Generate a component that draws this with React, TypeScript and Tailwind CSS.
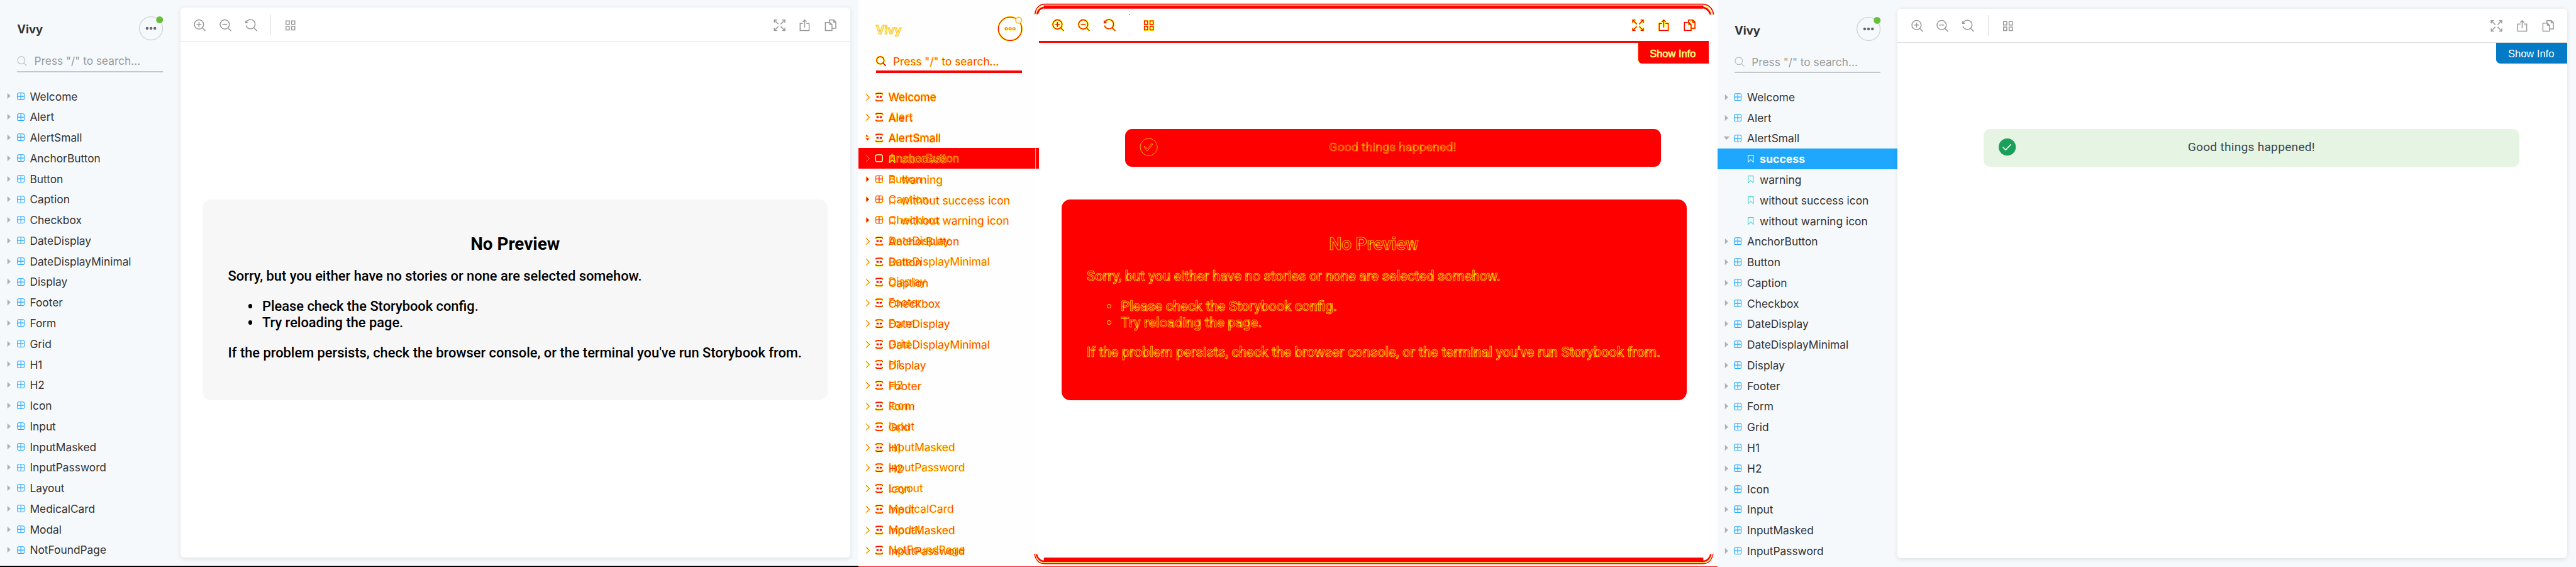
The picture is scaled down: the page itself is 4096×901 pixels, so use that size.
import type { ReactNode } from "react";

type Variant = "plain" | "diff";

const baseline = [
  "Welcome", "Alert", "AlertSmall", "AnchorButton", "Button", "Caption", "Checkbox", "DateDisplay",
  "DateDisplayMinimal", "Display", "Footer", "Form", "Grid", "H1", "H2", "Icon", "Input", "InputMasked",
  "InputPassword", "Layout", "MedicalCard", "Modal", "NotFoundPage",
];

const stories = ["success", "warning", "without success icon", "without warning icon"];

const current = [...baseline.slice(0, 3), ...stories, ...baseline.slice(3, 19)];

const isStory = (name: string) => stories.includes(name);

/* ---------- icons ---------- */

const shapes: Record<string, ReactNode> = {
  zoomIn: (
    <>
      <circle cx="12.3" cy="13" r="10.8" />
      <path d="M19.8 20.8 27 28M6.8 13h11M12.3 7.5v11" />
    </>
  ),
  zoomOut: (
    <>
      <circle cx="12.3" cy="13" r="10.8" />
      <path d="M19.8 20.8 27 28M6.8 13h11" />
    </>
  ),
  reset: <path d="M1.2 4v5.2h5.4M2 8.6A10.8 10.8 0 1 1 1.8 15.6M19.8 20.8 27 28" />,
  grid: <path d="M4 4.8h7.6v8H4zM17 4.8h7.6v8H17zM4 17.6h7.6v8H4zM17 17.6h7.6v8H17z" />,
  expand: (
    <path d="M8 2.7H1.7V9M2 3l9.3 9.3M20 2.7h6.3V9M26 3l-9.3 9.3M8 27H1.7v-6.3M2 26.7l9.3-9.3M20 27h6.3v-6.3M26 26.7l-9.3-9.3" />
  ),
  share: <path d="M9.8 10.7H3.3V27h21V10.7h-6.5M13.8 20V3M9.4 7l4.4-4.3L18.2 7" />,
  copy: (
    <path d="M2 8.3h10.5l5 5V27H2zM12.5 8.3v5h5M11.3 8V2.7h10.4l4.7 4.8V22h-8.6M21.5 2.7v5h5" />
  ),
};

function Icon({ name, variant }: { name: string; variant: Variant }) {
  if (variant === "diff") {
    return (
      <svg viewBox="0 0 28 28" fill="none" className="size-[19.11px] shrink-0 overflow-visible">
        <g stroke="#ffff00" strokeWidth="4.2">{shapes[name]}</g>
        <g stroke="#ff0000" strokeWidth="2">{shapes[name]}</g>
      </svg>
    );
  }
  return (
    <svg viewBox="0 0 28 28" fill="none" stroke="#999999" strokeWidth="2.2" className="size-[19.11px] shrink-0 overflow-visible">
      {shapes[name]}
    </svg>
  );
}

function SearchIcon({ variant }: { variant: Variant }) {
  const glass = (
    <>
      <circle cx="10" cy="10" r="8.6" />
      <path d="m16 16.3 6.6 6.6" />
    </>
  );
  return (
    <svg viewBox="0 0 24 24" fill="none" className="size-[16.38px] shrink-0 overflow-visible">
      {variant === "diff" ? (
        <>
          <g stroke="#ffff00" strokeWidth="4">{glass}</g>
          <g stroke="#ff0000" strokeWidth="2.2">{glass}</g>
        </>
      ) : (
        <g stroke="#bbbdbf" strokeWidth="1.8">{glass}</g>
      )}
    </svg>
  );
}

function Arrow({ open = false }: { open?: boolean }) {
  return (
    <svg viewBox="0 0 16 16" className="size-[10.92px] shrink-0">
      {open ? <path d="M1 4h14l-7 8z" fill="#aeb0b2" /> : <path d="M4 1v14l7.5-7z" fill="#aeb0b2" />}
    </svg>
  );
}

function ComponentIcon() {
  return (
    <svg viewBox="0 0 18 18" fill="none" stroke="#1ea7fd" strokeWidth="1.6" className="size-[12.29px] shrink-0">
      <rect x="1.1" y="1.1" width="15.8" height="15.8" rx="3" />
      <path d="M9 1v16M1 9h16" />
    </svg>
  );
}

function BookmarkIcon({ color }: { color: string }) {
  return (
    <svg viewBox="0 0 14 18" fill="none" stroke={color} strokeWidth="1.6" className="h-[12.29px] w-[9.56px] shrink-0">
      <path d="M1 .9h12v16L7 11.2 1 16.9z" />
    </svg>
  );
}

function CheckIcon({ variant }: { variant: Variant }) {
  const diff = variant === "diff";
  return (
    <svg viewBox="0 0 40 40" fill="none" className="size-[27.31px] shrink-0 overflow-visible">
      <circle cx="20" cy="20" r="20" fill={diff ? "none" : "#1aa05b"} stroke={diff ? "#ffff00" : "none"} />
      {diff ? (
        <path d="M8.6 19.5c1-2 2.6-1.5 3.2 0l4.7 5 9.5-12c1.5-1.2 3.3 0 2.5 1.8L18 28c-.8.9-2 .9-2.8 0z" stroke="#ffff00" />
      ) : (
        <path d="m10.3 20.5 6 6.3L28 14.5" stroke="#e6f4e3" strokeWidth="2.6" strokeLinecap="round" />
      )}
    </svg>
  );
}

/* ---------- sidebar ---------- */

function MenuButton({ variant }: { variant: Variant }) {
  const diff = variant === "diff";
  return (
    <svg viewBox="0 0 56 56" className="size-[38.23px] shrink-0 overflow-visible">
      {diff ? (
        <g fill="none">
          <circle cx="28" cy="29" r="27.3" stroke="#ffff00" strokeWidth="4" />
          <circle cx="28" cy="29" r="27.3" stroke="#ff0000" strokeWidth="2" />
          <circle cx="48" cy="9" r="7.6" fill="#f3f3f3" stroke="#ffff00" strokeWidth="2" />
          <circle cx="48" cy="9" r="7" stroke="#ff0000" strokeWidth=".6" />
          {[19, 28, 37].map((x) => (
            <g key={x}>
              <circle cx={x} cy="29" r="3.3" fill="#f3f3f3" stroke="#ffff00" strokeWidth="1.8" />
              <circle cx={x} cy="29" r="2.8" stroke="#ff0000" strokeWidth="1.2" />
            </g>
          ))}
        </g>
      ) : (
        <>
          <circle cx="28" cy="28" r="27" fill="none" stroke="#d0d3d6" strokeWidth="2" />
          <circle cx="48" cy="8" r="8" fill="#66bf3c" />
          {[19, 28, 37].map((x) => (
            <circle key={x} cx={x} cy="28" r="3.3" fill="#666666" />
          ))}
        </>
      )}
    </svg>
  );
}

function SidebarHeader({ variant }: { variant: Variant }) {
  const diff = variant === "diff";
  return (
    <div className="px-[27.31px]">
      <div className="flex h-[38.23px] items-center justify-between">
        <div
          className={
            diff
              ? "pt-[3.4px] text-[18.45px] leading-[24px] font-bold text-[#f4f0e8] [-webkit-text-stroke:1.1px_#ffc800]"
              : "pt-[2.7px] text-[18.45px] leading-[24px] font-bold text-[#333333]"
          }
        >
          Vivy
        </div>
        <MenuButton variant={variant} />
      </div>
      <div
        className={
          diff
            ? "mt-[17.75px] flex h-[34.13px] items-center border-b-[4px] border-[#ff0000]"
            : "mt-[17.75px] flex h-[32.77px] items-center border-b-[2px] border-[#c4c7ca]"
        }
      >
        <SearchIcon variant={variant} />
        <span
          className={
            diff
              ? "ml-[10.9px] pt-[2px] text-[17.3px] leading-[24px] whitespace-nowrap text-[#ff0000] [-webkit-text-stroke:0.5px_#ffe000]"
              : "ml-[10.9px] text-[17.3px] leading-[24px] whitespace-nowrap text-[#999999]"
          }
        >
          {'Press "/" to search...'}
        </span>
      </div>
    </div>
  );
}

function TreeRow({ name, open, selected }: { name: string; open?: boolean; selected?: boolean }) {
  if (isStory(name)) {
    return (
      <li
        className={
          selected
            ? "flex h-[32.77px] items-center bg-[#1ea7fd] pl-[48.3px] text-[17.7px] font-bold text-white"
            : "flex h-[32.77px] items-center pl-[48.3px] text-[17.4px] text-[#333333]"
        }
      >
        <BookmarkIcon color={selected ? "#ffffff" : "#37d5d3"} />
        <span className="ml-[9.6px] pt-[1.4px] leading-[24px] whitespace-nowrap">{name}</span>
      </li>
    );
  }
  return (
    <li className="flex h-[32.77px] items-center pl-[9.4px] text-[17.34px] text-[#333333]">
      <Arrow open={open} />
      <span className="ml-[6.3px] flex">
        <ComponentIcon />
      </span>
      <span className="ml-[8.5px] pt-[1.4px] leading-[24px] whitespace-nowrap">{name}</span>
    </li>
  );
}

function DiffMarks({ row }: { row: number }) {
  const story = row > 3 && row < 7;
  return (
    <svg viewBox="0 0 60 48" className="col-start-1 row-start-1 h-[32.77px] w-[40.96px]">
      {row === 2 && (
        <g>
          <path d="M15 23h13l-6.5 8z" fill="#ffffff" stroke="#ffff00" strokeWidth="1.6" />
          <path d="M18 18l5 3.5h-5zM17 26l4 4.5 4.5-4" fill="#ff0000" stroke="#ff0000" strokeWidth=".5" />
        </g>
      )}
      {row === 3 && <path d="M18 17l7.5 7.5-7.5 7.5" fill="none" stroke="#ffff00" strokeWidth="1.2" />}
      {story && <path d="M18 18v13l7-6.5z" fill="#ff0000" stroke="#ffff00" strokeWidth=".5" />}
      {row !== 2 && row !== 3 && !story && (
        <g fill="none">
          <path d="M18 18v14l7.5-6z" fill="#f6f6f6" />
          <path d="M18 18l7.5 7.5L18 33" stroke="#ffff00" strokeWidth="2.4" />
          <path d="M18 18l7.5 7.5L18 33" stroke="#ff0000" strokeWidth="1.2" />
        </g>
      )}
      {row === 3 && <rect x="40" y="16" width="16" height="16" rx="3.5" fill="none" stroke="#ffffa8" strokeWidth="2.2" />}
      {story && (
        <g fill="none">
          <rect x="40" y="16" width="16.5" height="16.5" rx="3.5" stroke="#ffff00" strokeWidth="2.6" />
          <rect x="40.5" y="16.5" width="15.5" height="15.5" rx="3" stroke="#ff0000" strokeWidth="1.2" />
          <path d="M48.2 17v15M41 24h15" stroke="#ff0000" strokeWidth="1.8" />
        </g>
      )}
      {row !== 3 && !story && (
        <g fill="none">
          <path d="M40.5 20c0-3 1-3.5 3-3.5h9.5c2 0 3 .5 3 3.5M40.5 30.5c0 3 1 3.5 3 3.5h9.5c2 0 3-.5 3-3.5" stroke="#ffff00" strokeWidth="4" />
          <path d="M40.5 19.5c0-2.5 1-3 3-3h9.5c2 0 3 .5 3 3M40.5 31c0 2.5 1 3 3 3h9.5c2 0 3-.5 3-3" stroke="#ff0000" strokeWidth="2" />
          <path d="M42 25h5M49.5 25h5" stroke="#ff0000" strokeWidth="4" />
        </g>
      )}
    </svg>
  );
}

function DiffRow({ row }: { row: number }) {
  const before = baseline[row];
  const after = current[row];
  const story = isStory(after);
  const onRed = row === 3;
  return (
    <li className={onRed ? "grid h-[32.77px] grid-cols-1 bg-[#ff0000]" : "grid h-[32.77px] grid-cols-1"}>
      <DiffMarks row={row} />
      <span
        className={
          onRed
            ? "col-start-1 row-start-1 pt-[5px] pl-[47.4px] text-[17.34px] leading-[24px] whitespace-nowrap text-[#ff0000] [-webkit-text-stroke:0.6px_#ffe000]"
            : "col-start-1 row-start-1 pt-[5px] pl-[47.4px] text-[17.34px] leading-[24px] whitespace-nowrap text-[#ff0000] [-webkit-text-stroke:0.6px_#ffe800]"
        }
      >
        {before}
      </span>
      {story ? (
        <span
          className={
            onRed
              ? "col-start-1 row-start-1 flex items-start pt-[6.4px] pl-[48.3px] text-[17.7px] leading-[24px] font-bold text-[#ff0000] [-webkit-text-stroke:0.6px_#ffe000]"
              : "col-start-1 row-start-1 flex items-start pt-[6.4px] pl-[48.3px] text-[17.4px] leading-[24px] text-[#ff0000] [-webkit-text-stroke:0.6px_#ffd800]"
          }
        >
          <span className="flex h-[24px] items-center">
            <BookmarkIcon color={onRed ? "#ffff00" : "#ff7a00"} />
          </span>
          <span className="ml-[9.6px] whitespace-nowrap">{after}</span>
        </span>
      ) : (
        <span className="col-start-1 row-start-1 pt-[6.4px] pl-[47.4px] text-[17.34px] leading-[24px] whitespace-nowrap text-[#ff0000] [-webkit-text-stroke:0.45px_#ffe000]">
          {after}
        </span>
      )}
    </li>
  );
}

/* ---------- preview area ---------- */

function Toolbar({ variant }: { variant: Variant }) {
  const diff = variant === "diff";
  return (
    <div
      className={
        diff
          ? "flex h-[54.61px] shrink-0 items-center justify-between border-b-[3px] border-[#ff0000] px-[21.16px]"
          : "flex h-[54.61px] shrink-0 items-center justify-between border-b-[1.4px] border-[#dfdfdf] px-[21.16px]"
      }
    >
      <div className="flex items-center">
        <div className="flex gap-[21.85px]">
          <Icon name="zoomIn" variant={variant} />
          <Icon name="zoomOut" variant={variant} />
          <Icon name="reset" variant={variant} />
        </div>
        {diff ? (
          <div className="ml-[21.2px] flex h-[34px] w-[1px] flex-col justify-between">
            <div className="h-[1.4px] bg-[#ff0000]" />
            <div className="h-[1.4px] bg-[#ff0000]" />
          </div>
        ) : (
          <div className="ml-[21.2px] h-[32.77px] w-[1.4px] bg-[#e0e0e0]" />
        )}
        <div className="ml-[20.5px]">
          <Icon name="grid" variant={variant} />
        </div>
      </div>
      <div className="flex gap-[21.85px]">
        <Icon name="expand" variant={variant} />
        <Icon name="share" variant={variant} />
        <Icon name="copy" variant={variant} />
      </div>
    </div>
  );
}

function ShowInfo({ variant }: { variant: Variant }) {
  return (
    <button
      className={
        variant === "diff"
          ? "absolute top-0 right-0 h-[32.77px] w-[113.3px] rounded-bl-[6.83px] border-l border-[#ffff00] bg-[#ff0000] pr-[2px] font-['Liberation_Sans',Arial,sans-serif] text-[16.5px] leading-[32px] text-[#ffffb0] [-webkit-text-stroke:0.6px_#ffff60]"
          : "absolute top-0 right-0 h-[32.77px] w-[113.3px] rounded-bl-[6.83px] bg-[#027ac5] pr-[2px] font-['Liberation_Sans',Arial,sans-serif] text-[16.5px] leading-[32px] text-white"
      }
    >
      Show Info
    </button>
  );
}

function SuccessAlert({ variant }: { variant: Variant }) {
  return (
    <div
      className={
        variant === "diff"
          ? "mt-[136.53px] ml-[136.53px] flex h-[60.07px] w-[851.97px] shrink-0 items-center rounded-[10.92px] bg-[#ff0000] px-[24.58px] pb-[1.4px] text-[#ff0000] [-webkit-text-stroke:0.5px_#ffe000]"
          : "mt-[136.53px] ml-[136.53px] flex h-[60.07px] w-[851.97px] shrink-0 items-center rounded-[10.92px] bg-[#e6f4e3] px-[24.58px] pb-[1.4px] text-[#36474f]"
      }
    >
      <CheckIcon variant={variant} />
      <span className="flex-1 pr-[27.31px] pb-[1px] text-center font-['Roboto',sans-serif] text-[19.2px] leading-[28px] tracking-[0.24px]">
        Good things happened!
      </span>
    </div>
  );
}

function NoPreview({ variant }: { variant: Variant }) {
  const bullet = variant === "diff" ? "size-[6.83px] rounded-full border border-[#ffff00]" : "size-[6.83px] rounded-full bg-black";
  return (
    <div
      className={
        variant === "diff"
          ? "mx-auto mt-[51.88px] h-[319.49px] w-[993.96px] shrink-0 rounded-[13.65px] bg-[#ff0000] px-[40.4px] pt-[55.1px] font-['Roboto',sans-serif] text-[21.85px] leading-[25.94px] font-medium text-[#ff0000] [-webkit-text-stroke:0.65px_#ffff00]"
          : "mx-auto mt-[249.86px] h-[319.49px] w-[993.96px] shrink-0 rounded-[13.65px] bg-[#f7f7f7] px-[40.4px] pt-[55.1px] font-['Roboto',sans-serif] text-[21.85px] leading-[25.94px] font-medium text-black"
      }
    >
      <h1 className="text-center text-[27.85px] leading-[32.77px] font-bold">No Preview</h1>
      <p className="mt-[21.4px] whitespace-nowrap">Sorry, but you either have no stories or none are selected somehow.</p>
      <ul className="mt-[21.85px] pl-[32px]">
        {["Please check the Storybook config.", "Try reloading the page."].map((line) => (
          <li key={line} className="flex items-center gap-[15.6px]">
            <span className={bullet} />
            {line}
          </li>
        ))}
      </ul>
      <p className="mt-[21.85px] whitespace-nowrap">
        If the problem persists, check the browser console, or the terminal you've run Storybook from.
      </p>
    </div>
  );
}

/* ---------- panels ---------- */

function BaselinePanel() {
  return (
    <section className="flex h-[901px] w-[1365.33px] shrink-0 items-start overflow-hidden border-b-2 border-black bg-[#f6f9fc]">
      <aside className="w-[286.72px] shrink-0 pt-[25.94px]">
        <SidebarHeader variant="plain" />
        <ul className="mt-[21.85px]">
          {baseline.map((name) => (
            <TreeRow key={name} name={name} />
          ))}
        </ul>
      </aside>
      <main className="mt-[12.29px] flex h-[873.81px] w-[1064.96px] flex-col rounded-[6px] bg-white shadow-[0_1.4px_7px_rgba(0,0,0,0.1)]">
        <Toolbar variant="plain" />
        <NoPreview variant="plain" />
      </main>
    </section>
  );
}

function DiffFrame() {
  return (
    <svg viewBox="0 0 1600 1320" fill="none" className="pointer-events-none absolute top-0 left-[273.07px] h-[901px] w-[1092.27px]">
      <path d="M14 33C16 22 23 13 36 12H1564C1577 13 1586 22 1589 34" stroke="#ffff00" strokeWidth="1.4" />
      <path d="M11 33C13 19 21 10 34 9.8H1566C1580 10 1589 19 1592 34" stroke="#ff0000" strokeWidth="2.4" />
      <path d="M16.5 33C18 24 25 16.5 38 16.5H1562C1574 16.5 1582 24 1585 34" stroke="#ff0000" strokeWidth="4" />
      <path d="M32 13H1568V20H32z" fill="#ff0000" />
      <path d="M32 1298H1568V1309H32z" fill="#ff0000" />
      <path d="M14 1290C17 1300 24 1307 34 1307M1586 1290C1583 1300 1577 1307 1566 1307" stroke="#ff0000" strokeWidth="4" />
      <path d="M12 1289C15 1302 22 1309.5 34 1309.7H1566C1578 1309.5 1585 1302 1588 1289" stroke="#ffff00" strokeWidth="1.3" />
      <path d="M10 1289C12 1303 20 1312 32 1312.3H1568C1580 1312 1588 1303 1591 1289" stroke="#ff0000" strokeWidth="2" />
      <path d="M12.5 346V394" stroke="#ffff00" strokeWidth="1.2" />
    </svg>
  );
}

function DiffPanel() {
  return (
    <section className="relative flex h-[901px] w-[1365.33px] shrink-0 items-start overflow-hidden border-b-[1.4px] border-[#ff0000] bg-[#fefefe]">
      <aside className="w-[286.72px] shrink-0 pt-[25.94px]">
        <SidebarHeader variant="diff" />
        <ul className="mt-[20.48px]">
          {baseline.map((name, row) => (
            <DiffRow key={name} row={row} />
          ))}
        </ul>
      </aside>
      <main className="mt-[13.65px] flex h-[872.45px] w-[1064.96px] flex-col bg-white">
        <Toolbar variant="diff" />
        <div className="relative flex flex-1 flex-col">
          <SuccessAlert variant="diff" />
          <NoPreview variant="diff" />
          <ShowInfo variant="diff" />
        </div>
      </main>
      <DiffFrame />
    </section>
  );
}

function CurrentPanel() {
  return (
    <section className="flex h-[901px] w-[1365.33px] shrink-0 items-start overflow-hidden bg-[#f6f9fc]">
      <aside className="w-[286.72px] shrink-0 pt-[27.31px]">
        <SidebarHeader variant="plain" />
        <ul className="mt-[21.85px]">
          {current.map((name) => (
            <TreeRow key={name} name={name} open={name === "AlertSmall"} selected={name === "success"} />
          ))}
        </ul>
      </aside>
      <main className="mt-[13.65px] flex h-[873.81px] w-[1064.96px] flex-col rounded-[6px] bg-white shadow-[0_1.4px_7px_rgba(0,0,0,0.1)]">
        <Toolbar variant="plain" />
        <div className="relative flex flex-1 flex-col">
          <SuccessAlert variant="plain" />
          <ShowInfo variant="plain" />
        </div>
      </main>
    </section>
  );
}

export default function App() {
  return (
    <div className="flex h-[901px] w-[4096px] overflow-hidden bg-white font-['Inter',sans-serif]">
      <BaselinePanel />
      <DiffPanel />
      <CurrentPanel />
    </div>
  );
}
